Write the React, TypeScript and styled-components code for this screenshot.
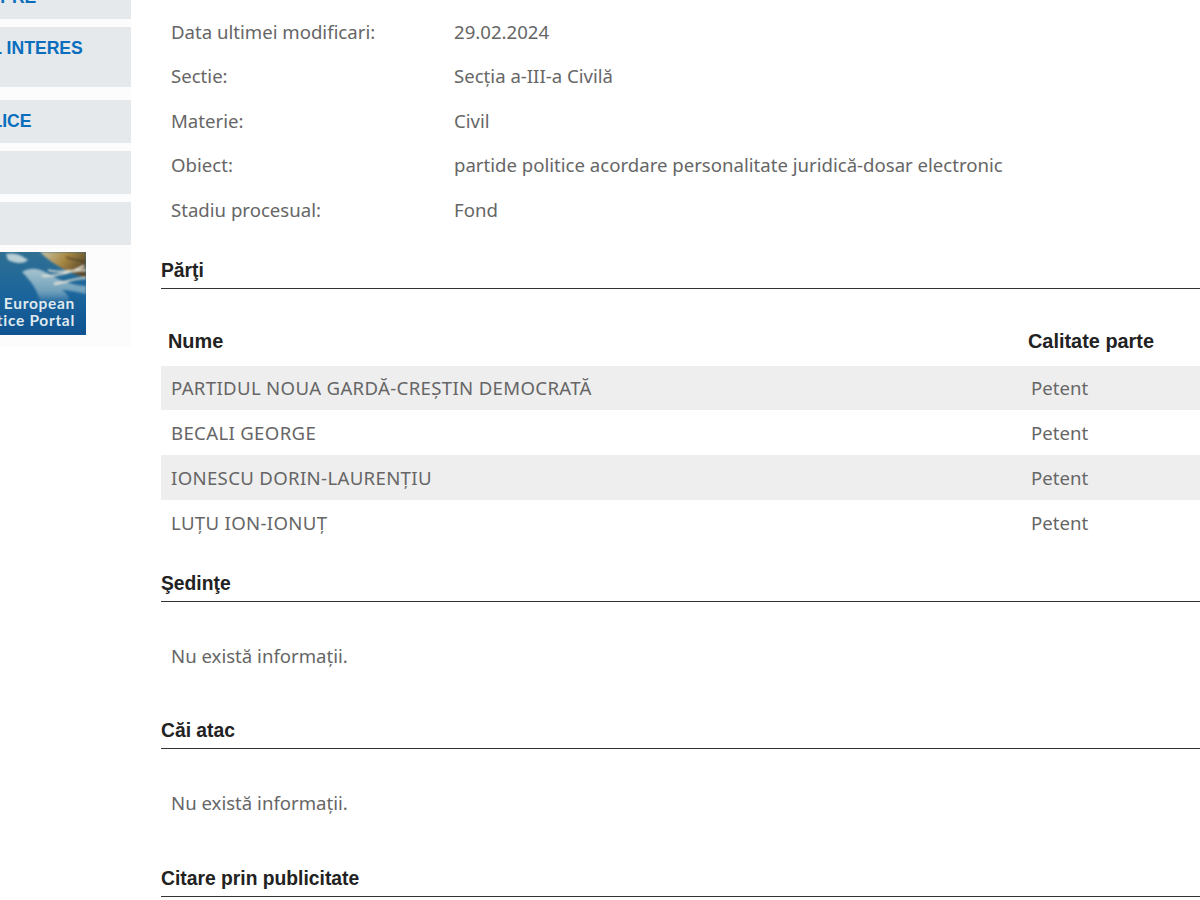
import React from 'react';
import styled, { createGlobalStyle } from 'styled-components';

const GlobalStyle = createGlobalStyle`
  html, body {
    margin: 0;
    padding: 0;
    background: #fff;
  }
`

const Page = styled.div`
  display: flex;
  width: 1200px;
  height: 900px;
  overflow: hidden;
  background: #fff;
`

const Sidebar = styled.nav`
  flex: none;
  width: 261px;
  height: 371px;
  margin: -24px 0 0 -130px;
  display: flex;
  flex-direction: column;
  background: #fcfcfc;
`

const MenuItem = styled.a<{ $height: number; $gap: number; $indent: number }>`
  display: block;
  box-sizing: border-box;
  height: ${p => p.$height}px;
  margin-bottom: ${p => p.$gap}px;
  padding-top: 11px;
  padding-left: ${p => p.$indent}px;
  background: #e5e9ec;
  color: #0a6ebd;
  font: bold 17.6px/20px "Liberation Sans", Arial, sans-serif;
  white-space: nowrap;
  overflow: hidden;
`

const PortalLogo = styled.svg`
  display: block;
  width: 216px;
  height: 83px;
  margin-top: -1px;
`

const Main = styled.main`
  flex: none;
  width: 1100px;
  margin-left: 30px;
  padding-top: 9px;
`

const Details = styled.div`
  display: flex;
  flex-direction: column;
  margin-bottom: 24px;
`

const DetailRow = styled.div`
  display: grid;
  grid-template-columns: 283px 1fr;
  height: 44.5px;
  align-items: center;
  padding-left: 10px;
  color: #666;
  font: 18.6px "Noto Sans", Tahoma, sans-serif;
`

const SectionTitle = styled.h2`
  margin: 0;
  height: 33px;
  box-sizing: border-box;
  padding-top: 3px;
  border-bottom: 1px solid #333;
  color: #222;
  font: bold 19.3px/24px "Liberation Sans", Arial, sans-serif;
`

const PartiesTable = styled.div`
  display: flex;
  flex-direction: column;
  margin-bottom: 24px;
`

const PartyHeader = styled.div`
  display: grid;
  grid-template-columns: 860px 1fr;
  height: 77px;
  box-sizing: border-box;
  padding: 40px 0 0 7px;
  color: #222;
  font: bold 19.9px/24px "Liberation Sans", Arial, sans-serif;
`

const PartyRow = styled.div<{ $shaded: boolean }>`
  display: grid;
  grid-template-columns: 860px 1fr;
  height: 44.75px;
  align-items: center;
  padding-left: 10px;
  background: ${p => (p.$shaded ? '#eee' : '#fff')};
  color: #666;
  font: 18.6px "Noto Sans", Tahoma, sans-serif;
`

const PartyName = styled.span`
  letter-spacing: 0.33px;
`

const EmptyNote = styled.p`
  margin: 0;
  height: 114.5px;
  box-sizing: border-box;
  padding: 42px 0 0 10px;
  color: #666;
  font: 18.6px/24px "Noto Sans", Tahoma, sans-serif;
`

const details = [
  ['Data ultimei modificari:', '29.02.2024'],
  ['Sectie:', 'Secția a-III-a Civilă'],
  ['Materie:', 'Civil'],
  ['Obiect:', 'partide politice acordare personalitate juridică-dosar electronic'],
  ['Stadiu procesual:', 'Fond'],
];

const parties = [
  'PARTIDUL NOUA GARDĂ-CREȘTIN DEMOCRATĂ',
  'BECALI GEORGE',
  'IONESCU DORIN-LAURENȚIU',
  'LUȚU ION-IONUȚ',
];

function App() {
  return (
    <Page>
      <GlobalStyle />
      <Sidebar>
        <MenuItem $height={43} $gap={8} $indent={94}>DESPRE</MenuItem>
        <MenuItem $height={60} $gap={13} $indent={61}>PORTAL INTERES</MenuItem>
        <MenuItem $height={43} $gap={8} $indent={11}>RELAȚII PUBLICE</MenuItem>
        <MenuItem $height={43} $gap={8} $indent={10} />
        <MenuItem $height={43} $gap={8} $indent={10} />
        <PortalLogo viewBox="0 0 216 83">
          <defs>
            <linearGradient id="logoBg" x1="0" y1="0" x2="0" y2="1">
              <stop offset="0" stopColor="#2f6f92" />
              <stop offset="0.5" stopColor="#1b659c" />
              <stop offset="1" stopColor="#0f5391" />
            </linearGradient>
            <linearGradient id="logoGold" x1="0" y1="0" x2="1" y2="0.4">
              <stop offset="0" stopColor="#c9c5a8" />
              <stop offset="0.55" stopColor="#a98843" />
              <stop offset="1" stopColor="#5f4e2d" />
            </linearGradient>
            <linearGradient id="logoSwirl" x1="0" y1="0" x2="0" y2="1">
              <stop offset="0" stopColor="#a9c4cf" />
              <stop offset="0.7" stopColor="#6e9fba" />
              <stop offset="1" stopColor="#22699f" />
            </linearGradient>
            <filter id="logoSoft">
              <feGaussianBlur stdDeviation="1.2" />
            </filter>
          </defs>
          <rect x="130" width="86" height="83" fill="url(#logoBg)" />
          <g filter="url(#logoSoft)">
            <path d="M170 0H216V26C202 22 184 14 170 0Z" fill="url(#logoGold)" />
            <path d="M136 2C146 0 152 4 158 8C154 12 146 12 138 8Z" fill="#b9cfd6" />
            <path d="M152 20C164 12 176 20 186 26C196 30 206 34 216 34V42C206 40 198 38 192 38C198 42 200 46 198 50H170C168 38 160 28 152 20Z" fill="url(#logoSwirl)" />
            <path d="M178 18C190 22 204 18 216 18M172 24C186 24 200 22 214 14M184 32C196 30 206 26 216 26" stroke="#ece9d8" strokeWidth="1.6" fill="none" />
            <path d="M196 5C204 8 210 9 216 9" stroke="#4f4126" strokeWidth="1.4" fill="none" />
          </g>
          <text x="205" y="57" textAnchor="end" letterSpacing="0.7" fill="#dfe8ee" fontFamily="Lato, sans-serif" fontWeight="700" fontSize="15.5">European</text>
          <text x="205" y="74" textAnchor="end" letterSpacing="0.7" fill="#dfe8ee" fontFamily="Lato, sans-serif" fontWeight="700" fontSize="15.5">Justice Portal</text>
        </PortalLogo>
      </Sidebar>
      <Main>
        <Details>
          {details.map(([label, value]) => (
            <DetailRow key={label}>
              <span>{label}</span>
              <span>{value}</span>
            </DetailRow>
          ))}
        </Details>
        <SectionTitle>Părţi</SectionTitle>
        <PartiesTable>
          <PartyHeader>
            <span>Nume</span>
            <span>Calitate parte</span>
          </PartyHeader>
          {parties.map((name, i) => (
            <PartyRow key={name} $shaded={i % 2 === 0}>
              <PartyName>{name}</PartyName>
              <span>Petent</span>
            </PartyRow>
          ))}
        </PartiesTable>
        <SectionTitle>Şedinţe</SectionTitle>
        <EmptyNote>Nu există informații.</EmptyNote>
        <SectionTitle>Căi atac</SectionTitle>
        <EmptyNote>Nu există informații.</EmptyNote>
        <SectionTitle>Citare prin publicitate</SectionTitle>
      </Main>
    </Page>
  );
}

export default App;
